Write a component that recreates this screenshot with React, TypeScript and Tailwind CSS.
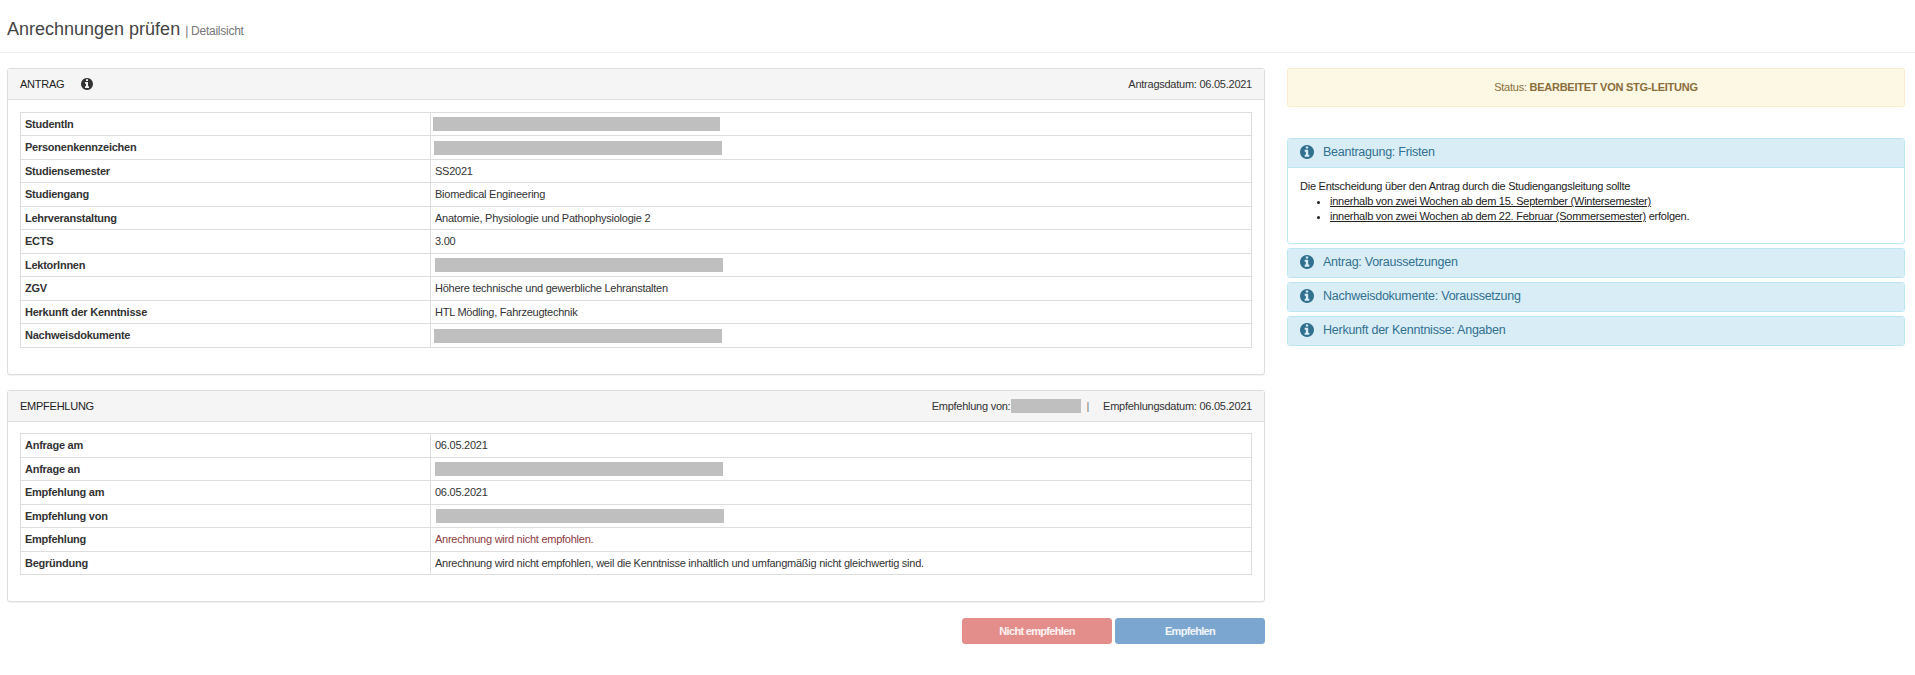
import type { ReactNode } from 'react';

type Row = { label: string; value?: string; bar?: string; danger?: boolean };

const antrag: Row[] = [
  { label: 'StudentIn', bar: 'ml-[-2px] w-[287px]' },
  { label: 'Personenkennzeichen', bar: 'ml-[-1px] w-[288px]' },
  { label: 'Studiensemester', value: 'SS2021' },
  { label: 'Studiengang', value: 'Biomedical Engineering' },
  { label: 'Lehrveranstaltung', value: 'Anatomie, Physiologie und Pathophysiologie 2' },
  { label: 'ECTS', value: '3.00' },
  { label: 'LektorInnen', bar: 'w-[288px]' },
  { label: 'ZGV', value: 'Höhere technische und gewerbliche Lehranstalten' },
  { label: 'Herkunft der Kenntnisse', value: 'HTL Mödling, Fahrzeugtechnik' },
  { label: 'Nachweisdokumente', bar: 'ml-[-1px] w-[288px]' },
];

const empfehlung: Row[] = [
  { label: 'Anfrage am', value: '06.05.2021' },
  { label: 'Anfrage an', bar: 'w-[288px]' },
  { label: 'Empfehlung am', value: '06.05.2021' },
  { label: 'Empfehlung von', bar: 'ml-[1px] w-[288px]' },
  { label: 'Empfehlung', value: 'Anrechnung wird nicht empfohlen.', danger: true },
  { label: 'Begründung', value: 'Anrechnung wird nicht empfohlen, weil die Kenntnisse inhaltlich und umfangmäßig nicht gleichwertig sind.' },
];

// font-awesome 4 info-circle, the icon the page uses
function InfoIcon({ className }: { className: string }) {
  return (
    <svg viewBox="128 128 1536 1536" fill="currentColor" className={className}>
      <path d="M1152 1376v-160q0-14-9-23t-23-9h-96v-512q0-14-9-23t-23-9h-320q-14 0-23 9t-9 23v160q0 14 9 23t23 9h96v320h-96q-14 0-23 9t-9 23v160q0 14 9 23t23 9h448q14 0 23-9t9-23zm-128-896v-160q0-14-9-23t-23-9h-192q-14 0-23 9t-9 23v160q0 14 9 23t23 9h192q14 0 23-9t9-23zm640 416q0 209-103 385.500t-279.500 279.500-385.500 103-385.500-103-279.500-279.500-103-385.500 103-385.500 279.500-279.500 385.500-103 385.500 103 279.500 279.500 103 385.500z" />
    </svg>
  );
}

function DetailTable({ rows, rowClass }: { rows: Row[]; rowClass: string }) {
  return (
    <table className="w-full table-fixed border-collapse">
      <colgroup>
        <col className="w-[410px]" />
        <col />
      </colgroup>
      <tbody>
        {rows.map((row) => (
          <tr key={row.label} className={rowClass}>
            <td className="border border-[#ddd] px-1 py-0 font-bold text-[#333]">{row.label}</td>
            <td className="border border-[#ddd] px-1 py-0">
              {row.bar ? (
                <div className={`h-[14px] bg-[#bfbfbf] ${row.bar}`} />
              ) : (
                <span className={row.danger ? 'text-[#8c3b3f]' : ''}>{row.value}</span>
              )}
            </td>
          </tr>
        ))}
      </tbody>
    </table>
  );
}

function Panel({ title, right, icon, bodyClass, children }: { title: string; right: ReactNode; icon?: boolean; bodyClass: string; children: ReactNode }) {
  return (
    <section className="rounded-[3px] border border-[#ddd] bg-white shadow-[0_1px_1px_rgba(0,0,0,0.05)]">
      <div className="flex h-[31px] items-center justify-between border-b border-[#ddd] bg-[#f5f5f5] pl-[12px] pr-[12px]">
        <div className="flex items-center">
          <span className="text-[#222]">{title}</span>
          {icon && <InfoIcon className="ml-[17px] h-[12px] w-[12px] text-[#333]" />}
        </div>
        <div className="flex items-center">{right}</div>
      </div>
      <div className={bodyClass}>{children}</div>
    </section>
  );
}

function InfoHeader({ title }: { title: string }) {
  return (
    <div className="flex h-[28px] items-center bg-[#d9edf7] pb-[2px] pl-[12px] text-[12.5px] tracking-[-0.25px] text-[#31708f]">
      <InfoIcon className="mr-[9px] h-[14px] w-[14px]" />
      {title}
    </div>
  );
}

export default function App() {
  return (
    <div className="h-[675px] bg-white text-[11px] tracking-[-0.25px] text-[#333] [font-family:'Liberation_Sans',Arial,sans-serif]">
      <header className="flex h-[53px] items-start border-b border-[#eee] pl-[7px] pt-[17px] tracking-normal">
        <h1 className="text-[18px] leading-[24px] text-[#444]">Anrechnungen prüfen</h1>
        <span className="ml-[5px] mt-[5px] text-[12px] leading-[18px] tracking-[-0.25px] text-[#777]">| Detailsicht</span>
      </header>

      <div className="flex gap-[22px] pl-[7px] pr-[10px] pt-[15px]">
        <main className="w-[1258px] shrink-0">
          <Panel
            title="ANTRAG"
            icon
            bodyClass="px-[12px] pb-[26px] pt-[12px]"
            right={<span>Antragsdatum: 06.05.2021</span>}
          >
            <DetailTable rows={antrag} rowClass="odd:h-[23px] even:h-[24px]" />
          </Panel>
          <div className="mt-[15px]">
            <Panel
              title="EMPFEHLUNG"
              bodyClass="px-[12px] pb-[26px] pt-[11px]"
              right={
                <>
                  <span>Empfehlung von:</span>
                  <span className="ml-[1px] h-[14px] w-[70px] bg-[#bfbfbf]" />
                  <span className="ml-[5px] text-[#777]">|</span>
                  <span className="ml-[14px]">Empfehlungsdatum: 06.05.2021</span>
                </>
              }
            >
              <DetailTable rows={empfehlung} rowClass="odd:h-[24px] even:h-[23px]" />
            </Panel>
          </div>
          <div className="mt-[16px] flex justify-end gap-[3px] text-[11px] font-bold tracking-[-0.68px] text-white/90">
            <button className="h-[26px] w-[150px] rounded-[3px] border border-[#e38d8b] bg-[#e48e8c]">Nicht empfehlen</button>
            <button className="h-[26px] w-[150px] rounded-[3px] border border-[#7aa6cf] bg-[#7ba6cf]">Empfehlen</button>
          </div>
        </main>

        <aside className="min-w-0 flex-1">
          <div className="flex h-[39px] items-center justify-center rounded-[3px] border border-[#faebcc] bg-[#fcf8e3] text-[#8a6d3b]">
            Status:&nbsp;<b>BEARBEITET VON STG-LEITUNG</b>
          </div>

          <div className="mt-[31px] overflow-hidden rounded-[3px] border border-[#bce8f1] bg-white">
            <InfoHeader title="Beantragung: Fristen" />
            <div className="h-[76px] border-t border-[#bce8f1] pl-[12px] pt-[11px] leading-[15px] text-[#222]">
              <p>Die Entscheidung über den Antrag durch die Studiengangsleitung sollte</p>
              <ul className="list-disc pl-[30px]">
                <li><u>innerhalb von zwei Wochen ab dem 15. September (Wintersemester)</u></li>
                <li><u>innerhalb von zwei Wochen ab dem 22. Februar (Sommersemester)</u> erfolgen.</li>
              </ul>
            </div>
          </div>

          <div className="mt-[4px] flex flex-col gap-[4px]">
            {['Antrag: Voraussetzungen', 'Nachweisdokumente: Voraussetzung', 'Herkunft der Kenntnisse: Angaben'].map((title) => (
              <div key={title} className="overflow-hidden rounded-[3px] border border-[#bce8f1]">
                <InfoHeader title={title} />
              </div>
            ))}
          </div>
        </aside>
      </div>
    </div>
  );
}
